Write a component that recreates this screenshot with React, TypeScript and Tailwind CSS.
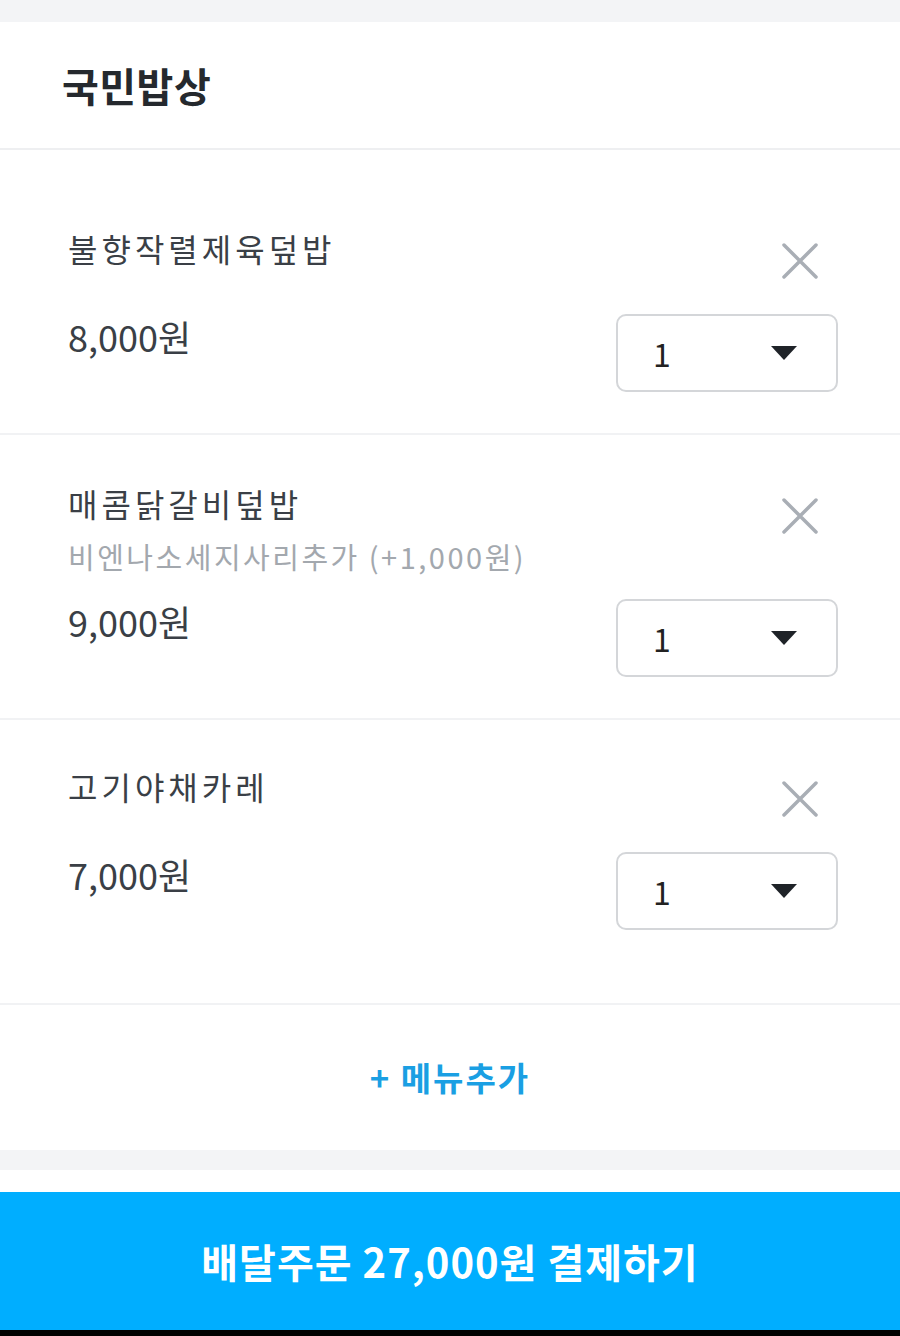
import { Fragment } from "react";

interface CartItem {
  name: string;
  option?: string;
  price: string;
  padTop: string;
}

const items: CartItem[] = [
  { name: "불향작렬제육덮밥", price: "8,000원", padTop: "pt-[78px]" },
  {
    name: "매콤닭갈비덮밥",
    option: "비엔나소세지사리추가 (+1,000원)",
    price: "9,000원",
    padTop: "pt-[48px]",
  },
  { name: "고기야채카레", price: "7,000원", padTop: "pt-[46px]" },
];

function CloseIcon() {
  return (
    <svg width="36" height="36" viewBox="0 0 36 36" fill="none">
      <path d="M2 2L34 34M34 2L2 34" stroke="#a9aeb5" strokeWidth="3.5" strokeLinecap="round" />
    </svg>
  );
}

function QtySelect() {
  return (
    <div className="w-[222px] h-[78px] border-2 border-[#d4d6d9] rounded-[10px] flex items-center justify-between pl-[35px] pr-[39px]">
      <span className="text-[32px] text-[#222] leading-none">1</span>
      <svg width="26" height="14" viewBox="0 0 26 14">
        <path d="M0 0H26L13 14Z" fill="#1f2328" />
      </svg>
    </div>
  );
}

export default function App() {
  return (
    <div
      className="w-[900px] h-[1336px] bg-white flex flex-col"
      style={{ fontFamily: '"Noto Sans CJK KR", "Noto Sans", sans-serif' }}
    >
      <div className="h-[22px] bg-[#f3f4f6]" />
      <header className="h-[128px] flex items-center pl-[62px] border-b-2 border-[#eeeff1]">
        <h1 className="text-[40px] font-bold text-[#25292e] tracking-[0.5px]">국민밥상</h1>
      </header>

      {items.map((item) => (
        <Fragment key={item.name}>
          <div className={`h-[285px] border-b-2 border-[#f1f2f4] pl-[68px] pr-[62px] ${item.padTop}`}>
            <div className="flex justify-between h-[40px]">
              <div className="text-[32px] leading-[40px] text-[#3a3f46] tracking-[4px]">{item.name}</div>
              <div className="mt-[15px] mr-[20px]">
                <CloseIcon />
              </div>
            </div>
            {item.option && (
              <div className="mt-[15px] text-[29px] leading-[36px] text-[#a3a8ae] tracking-[2.5px]">
                {item.option}
              </div>
            )}
            <div className={`flex justify-between items-start ${item.option ? "mt-[25px]" : "mt-[46px]"}`}>
              <div className="text-[36px] leading-[44px] text-[#3a3f46]">{item.price}</div>
              <QtySelect />
            </div>
          </div>
        </Fragment>
      ))}

      <div className="h-[145px] flex items-center justify-center">
        <span className="text-[33px] font-bold text-[#1a9fe3] tracking-[2px]">+ 메뉴추가</span>
      </div>
      <div className="h-[20px] bg-[#f3f4f6]" />
      <div className="h-[22px] bg-white" />
      <button className="h-[138px] w-full bg-[#00aeff] flex items-center justify-center">
        <span className="text-[40px] font-bold text-white tracking-[1px]">배달주문 27,000원 결제하기</span>
      </button>
      <div className="flex-1 bg-black" />
    </div>
  );
}
